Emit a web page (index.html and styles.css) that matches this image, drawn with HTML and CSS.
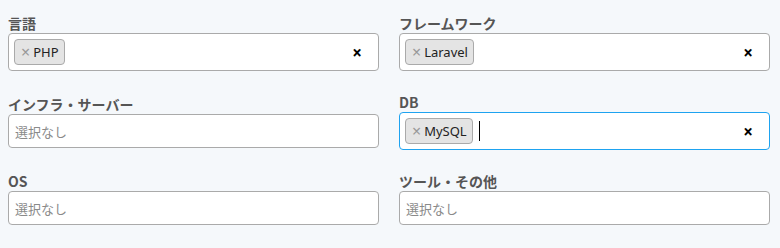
FILE: index.html
```html
<!DOCTYPE html>
<html lang="ja">
<head>
<meta charset="utf-8">
<link rel="stylesheet" href="styles.css">
</head>
<body>
<div class="form">
  <div class="field">
    <div class="label">言語</div>
    <div class="select has-tags">
      <span class="tag"><span class="tag-x">×</span>PHP</span>
      <span class="clear">×</span>
    </div>
  </div>
  <div class="field">
    <div class="label">フレームワーク</div>
    <div class="select has-tags">
      <span class="tag"><span class="tag-x">×</span>Laravel</span>
      <span class="clear">×</span>
    </div>
  </div>
  <div class="field">
    <div class="label">インフラ・サーバー</div>
    <div class="select"><span class="placeholder">選択なし</span></div>
  </div>
  <div class="field">
    <div class="label">DB</div>
    <div class="select has-tags focus">
      <span class="tag"><span class="tag-x">×</span>MySQL</span>
      <span class="caret"></span>
      <span class="clear">×</span>
    </div>
  </div>
  <div class="field">
    <div class="label">OS</div>
    <div class="select"><span class="placeholder">選択なし</span></div>
  </div>
  <div class="field">
    <div class="label">ツール・その他</div>
    <div class="select"><span class="placeholder">選択なし</span></div>
  </div>
</div>
</body>
</html>
```

FILE: styles.css
```css
html, body {
  margin: 0;
  padding: 0;
  background: #f5f8fb;
}
body {
  font-family: "Noto Sans", "Noto Sans CJK JP", sans-serif;
  font-size: 13px;
  color: #333;
}
.form {
  display: grid;
  grid-template-columns: 371px 371px;
  column-gap: 20px;
  row-gap: 21px;
  align-items: center;
  padding: 13px 10px 0 8px;
}
.label {
  font-family: "Noto Sans CJK JP", sans-serif;
  font-weight: bold;
  font-size: 14px;
  line-height: 20px;
  color: #555;
}
.select {
  box-sizing: border-box;
  height: 34px;
  border: 1px solid #aaa;
  border-radius: 4px;
  background: #fff;
  display: flex;
  align-items: center;
  padding: 0 5px 0 6px;
}
.select.has-tags {
  height: 38px;
  padding-left: 5px;
}
.select.focus {
  border-color: #1ea3f0;
}
.placeholder {
  font-family: "Noto Sans CJK JP", sans-serif;
  color: #8a8a8a;
  font-size: 13px;
}
.tag {
  box-sizing: border-box;
  height: 26px;
  display: inline-flex;
  align-items: center;
  background: #e4e4e4;
  border: 1px solid #aaa;
  border-radius: 4px;
  padding: 0 5px 0 6px;
  color: #222;
  font-size: 13px;
}
.tag-x {
  color: #999;
  font-size: 16px;
  line-height: 1;
  margin-right: 3px;
}
.caret {
  width: 1px;
  height: 20px;
  background: #000;
  margin-left: 6px;
}
.clear {
  margin-left: auto;
  margin-right: 11px;
  font-weight: bold;
  font-size: 17px;
  line-height: 1;
  color: #000;
}
```
